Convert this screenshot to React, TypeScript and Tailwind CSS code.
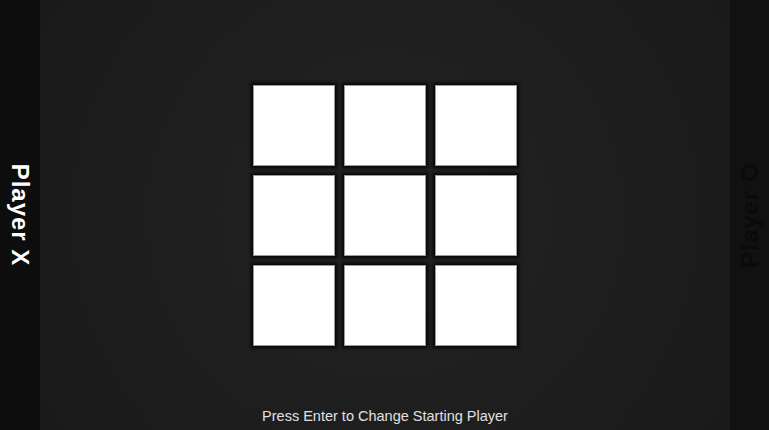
export default function App() {
  const cells = Array.from({ length: 9 });

  return (
    <div
      className="flex h-[430px] w-[769px] overflow-hidden bg-[#1c1c1c]"
      style={{ fontFamily: '"Liberation Sans", Arial, sans-serif' }}
    >
      {/* left player panel */}
      <div className="flex w-[40px] shrink-0 items-center justify-center bg-[#0d0d0d]">
        <span className="rotate-90 whitespace-nowrap text-[24px] font-bold tracking-[1px] text-white">
          Player X
        </span>
      </div>

      {/* board */}
      <div className="grid flex-1 grid-rows-[1fr_auto_1fr] bg-[radial-gradient(circle_at_center,#232323_0%,#1e1e1e_55%,#1a1a1a_100%)]">
        <div />
        <div className="grid grid-cols-[repeat(3,82px)] justify-center gap-[9px]">
          {cells.map((_, i) => (
            <button
              key={i}
              className="h-[81px] w-[82px] border border-[#9a9a9a] bg-white shadow-[0_0_3px_2px_rgba(0,0,0,0.85)]"
            />
          ))}
        </div>
        <div className="flex items-end justify-center pb-[2px]">
          <span className="text-[14.5px] text-[#e0e0e0]">
            Press Enter to Change Starting Player
          </span>
        </div>
      </div>

      {/* right player panel */}
      <div className="flex w-[39px] shrink-0 items-center justify-center bg-[#111111]">
        <span className="-rotate-90 whitespace-nowrap text-[24px] font-bold tracking-[1px] text-[#0a0a0a]">
          Player O
        </span>
      </div>
    </div>
  );
}
